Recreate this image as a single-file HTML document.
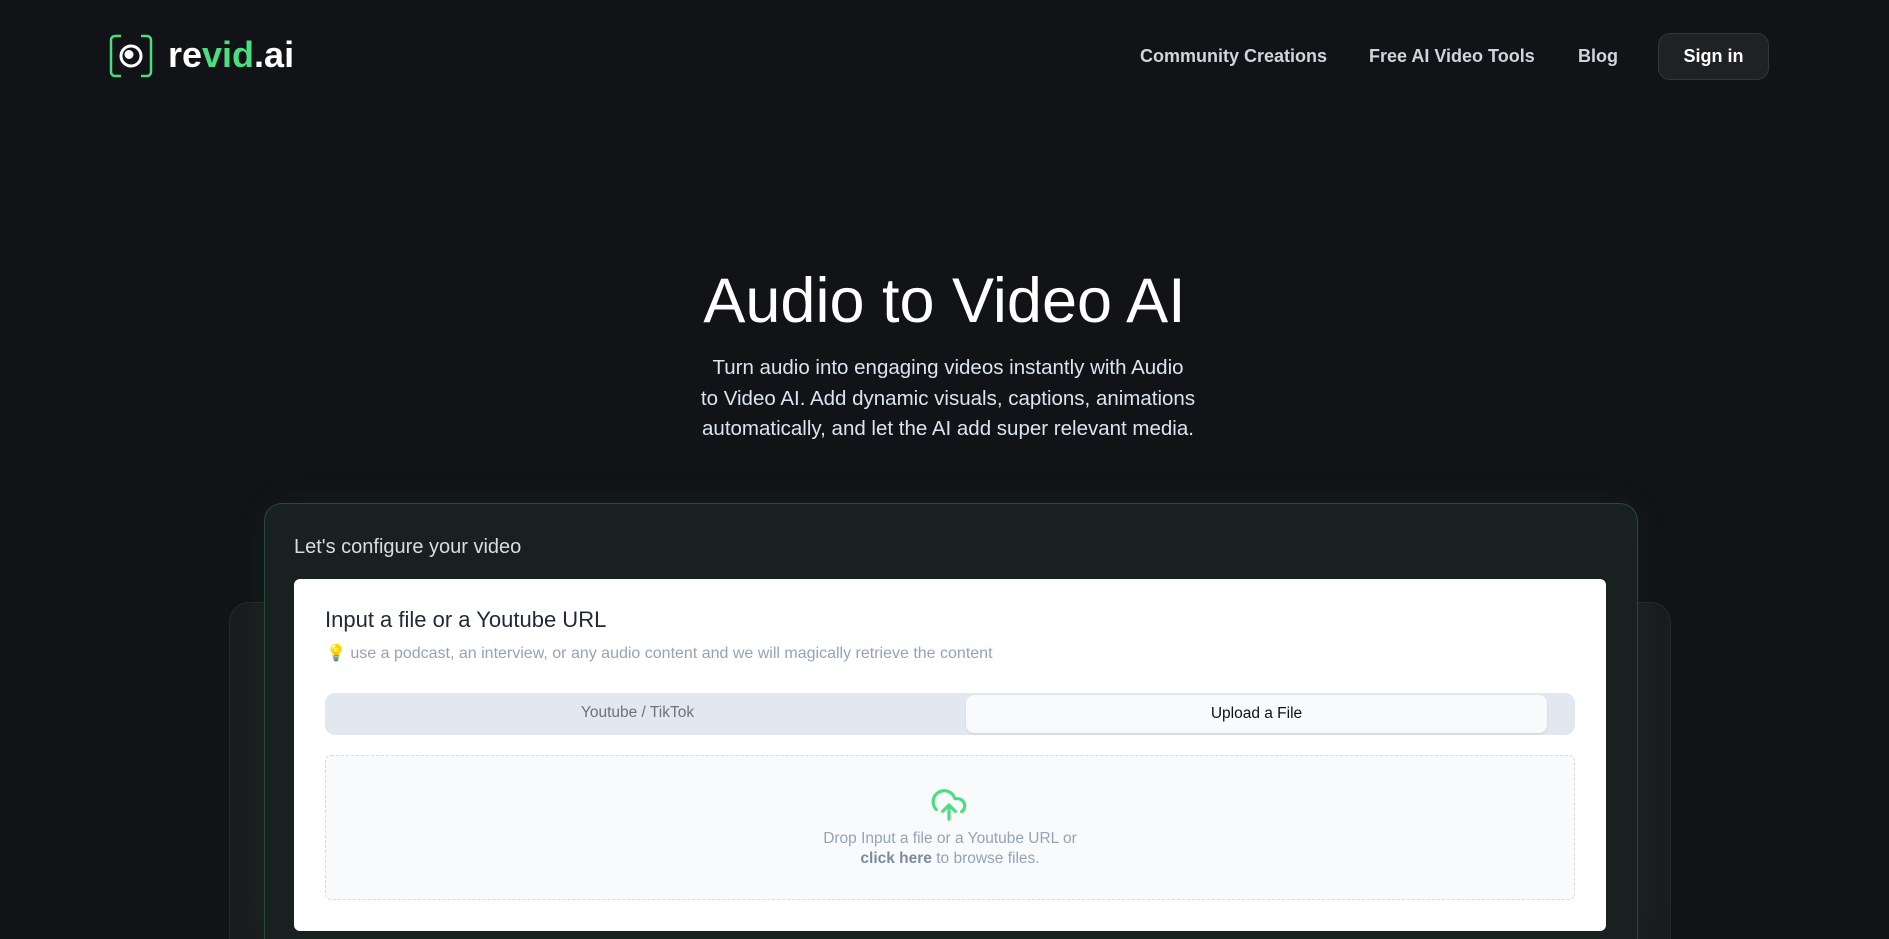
<!DOCTYPE html>
<html style="overflow:hidden;width:1889px;height:939px"><head><meta charset="utf-8"><style>
*{box-sizing:border-box;margin:0;padding:0}
html,body{width:1889px;height:939px;overflow:hidden}
body{background:#111317;font-family:"Liberation Sans",sans-serif;position:relative;color:#fff}
.abs{position:absolute}
.nav{font-size:18px;font-weight:bold;color:#d1d5db;top:46px}
</style></head><body>
<svg class="abs" style="left:109px;top:34px" width="44" height="44" viewBox="0 0 44 44" fill="none">
<path d="M12 2H6a4 4 0 0 0-4 4v32a4 4 0 0 0 4 4h6M32 2h6a4 4 0 0 1 4 4v32a4 4 0 0 1-4 4h-6" stroke="#4ade80" stroke-width="2.5"/>
<circle cx="22" cy="22" r="10" stroke="#fff" stroke-width="3"/><circle cx="20" cy="20.5" r="4.5" fill="#fff"/>
</svg>
<div class="abs" style="left:168px;top:34px;font-size:36px;font-weight:bold">re<span style="color:#4ade80">vid</span>.ai</div>
<div class="abs nav" style="left:1140px">Community Creations</div>
<div class="abs nav" style="left:1369px">Free AI Video Tools</div>
<div class="abs nav" style="left:1578px">Blog</div>
<div class="abs" style="left:1658px;top:33px;width:111px;height:47px;border-radius:12px;background:#1f2124;border:1px solid #33363b;font-size:18px;font-weight:bold;text-align:center;line-height:45px">Sign in</div>
<div class="abs" style="left:0;width:1889px;top:265px;text-align:center;font-size:63px">Audio to Video AI</div>
<div class="abs" style="left:0;width:1896px;top:353px;text-align:center;font-size:20.5px;line-height:30.5px;color:#dbe4f0;white-space:nowrap">Turn audio into engaging videos instantly with Audio<br>to Video AI. Add dynamic visuals, captions, animations<br>automatically, and let the AI add super relevant media.</div>
<div class="abs" style="left:229px;top:602px;width:1442px;height:337px;border-radius:20px 20px 0 0;background:#1a1c1e;border:1px solid #25282b;border-bottom:none"></div>
<div class="abs" style="left:264px;top:503px;width:1374px;height:436px;border-radius:18px 18px 0 0;background:#182020;border:1px solid #2a4a38;border-bottom:none;box-shadow:0 0 40px rgba(74,222,128,0.06)"></div>
<div class="abs" style="left:294px;top:536px;font-size:20px;color:#d8dde2">Let's configure your video</div>
<div class="abs" style="left:294px;top:579px;width:1312px;height:352px;border-radius:6px;background:#fff"></div>
<div class="abs" style="left:325px;top:607px;font-size:22px;color:#1f2937">Input a file or a Youtube URL</div>
<div class="abs" style="left:326px;top:643px;font-size:16px;color:#94a3b8">💡&nbsp;use a podcast, an interview, or any audio content and we will magically retrieve the content</div>
<div class="abs" style="left:325px;top:693px;width:1250px;height:42px;border-radius:10px;background:#e2e8f0"></div>
<div class="abs" style="left:325px;width:625px;top:704px;text-align:center;font-size:15.5px;color:#6b7280">Youtube / TikTok</div>
<div class="abs" style="left:966px;top:695px;width:581px;height:38px;border-radius:8px;background:#f8fafc;box-shadow:0 1px 2px rgba(0,0,0,.1);text-align:center;line-height:38px;font-size:15.5px;color:#111">Upload a File</div>
<div class="abs" style="left:325px;top:755px;width:1250px;height:145px;border-radius:6px;background:#f8fafc;border:1px dashed #d5dbe3"></div>
<svg class="abs" style="left:930px;top:786px" width="38" height="38" viewBox="0 0 24 24" fill="none" stroke="#4ade80" stroke-width="2" stroke-linecap="round" stroke-linejoin="round"><path d="M4 14.9A7 7 0 1 1 15.7 8h1.8a4.5 4.5 0 0 1 2.5 8.2"/><path d="M12 12v9"/><path d="m16 16-4-4-4 4"/></svg>
<div class="abs" style="left:325px;width:1250px;top:829px;text-align:center;font-size:15.5px;line-height:20px;color:#94a3b8">Drop Input a file or a Youtube URL or<br><b style="color:#7c8ba1">click here</b> to browse files.</div>
</body></html>
